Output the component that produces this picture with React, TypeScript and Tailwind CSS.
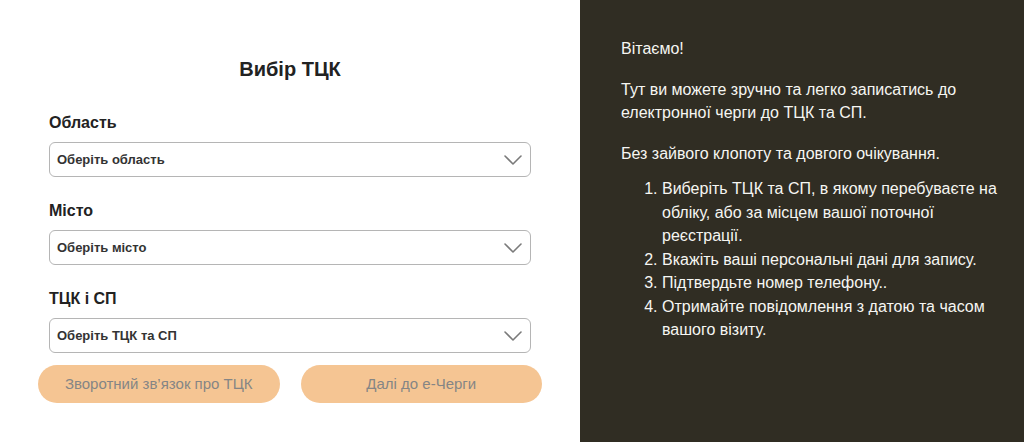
import React from "react";

function Chevron() {
  return (
    <svg width="18" height="10" viewBox="0 0 18 10" fill="none" className="shrink-0">
      <path d="M1 1 L9 9 L17 1" stroke="#7a7a7a" strokeWidth="1.6" strokeLinecap="round" strokeLinejoin="round" />
    </svg>
  );
}

function Field({ label, placeholder }: { label: string; placeholder: string }) {
  return (
    <div className="flex flex-col">
      <div className="text-[16px] leading-[24px] font-bold text-[#222]">{label}</div>
      <div className="mt-[7px] h-[35px] border border-[#b5b5b5] rounded-[6px] flex items-center justify-between pl-[7px] pr-[8px] bg-white">
        <span className="text-[13px] font-bold text-[#333]">{placeholder}</span>
        <Chevron />
      </div>
    </div>
  );
}

export default function App() {
  return (
    <div
      className="w-[1024px] h-[442px] flex bg-white overflow-hidden"
      style={{ fontFamily: '"Liberation Sans", Arial, sans-serif' }}
    >
      <div className="w-[580px] shrink-0 flex flex-col items-center pt-[55px]">
        <h1 className="text-[20px] leading-[28px] font-bold text-[#222]">Вибір ТЦК</h1>
        <div className="w-[482px] mt-[28px] flex flex-col gap-[22px]">
          <Field label="Область" placeholder="Оберіть область" />
          <Field label="Місто" placeholder="Оберіть місто" />
          <Field label="ТЦК і СП" placeholder="Оберіть ТЦК та СП" />
        </div>
        <div className="w-[504px] mt-[12px] flex gap-[21px]">
          <button className="flex-1 h-[38px] rounded-full bg-[#f5c593] text-[15px] text-[#858585]">
            Зворотний зв’язок про ТЦК
          </button>
          <button className="flex-1 h-[38px] rounded-full bg-[#f5c593] text-[15px] text-[#858585]">
            Далі до е-Черги
          </button>
        </div>
      </div>
      <div className="flex-1 bg-[#302d23] text-[#f6f6f2] pl-[41px] pr-[22px] pt-[37px] text-[16px] leading-[23.5px]">
        <p className="mb-[17px]">Вітаємо!</p>
        <p className="mb-[17px] max-w-[350px]">Тут ви можете зручно та легко записатись до електронної черги до ТЦК та СП.</p>
        <p className="mb-[12px]">Без зайвого клопоту та довгого очікування.</p>
        <ol className="list-decimal pl-[41px]">
          <li>Виберіть ТЦК та СП, в якому перебуваєте на обліку, або за місцем вашої поточної реєстрації.</li>
          <li>Вкажіть ваші персональні дані для запису.</li>
          <li>Підтвердьте номер телефону..</li>
          <li>Отримайте повідомлення з датою та часом вашого візиту.</li>
        </ol>
      </div>
    </div>
  );
}
